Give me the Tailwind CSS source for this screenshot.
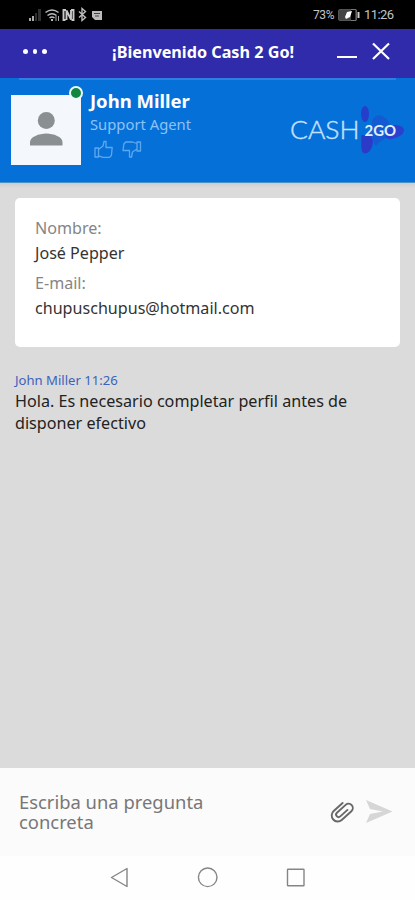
<!DOCTYPE html>
<html lang="es">
<head>
<meta charset="utf-8">
<meta name="viewport" content="width=device-width, initial-scale=1">
<title>Cash 2 Go</title>
<script src="https://cdn.jsdelivr.net/npm/@tailwindcss/browser@4"></script>
</head>
<body class="w-[415px] h-[900px] overflow-hidden flex flex-col bg-[#dbdbdb] font-['Noto_Sans',sans-serif] whitespace-nowrap">
  <!-- Status bar -->
  <div class="h-[29px] shrink-0 bg-black flex items-center pl-[28px] pr-[20px] text-[#c4c4c4]">
    <svg class="w-[76px] h-[16px]" viewBox="28 7 76 16" fill="none">
      <path d="M29 18h2v3h-2zM32 16h2v5h-2z" fill="#aaa"/><path d="M35 13h2v8h-2zM38 9h3v12h-3z" fill="#303030"/>
      <path d="M45.500 12.500q6.500-5 13 0M47.500 15.500q4.500-3.500 9 0M49.500 18q2.500-2 5 0" stroke="#bbb" stroke-width="1.500"/>
      <path d="M51 19h2v2h-2z" fill="#bbb"/><path d="M56 16v5M58.500 16v5" stroke="#aaa"/>
      <path d="M66 10h-2.500v10h2M66.500 20v-9.500l4.500 9v-9.500M71 10h2.500v10h-2" stroke="#c8c8c8" stroke-width="1.900"/>
      <path d="M79 11.500l6.500 6-3.500 3v-12l3.500 3-6.500 6" stroke="#bbb" stroke-width="1.400"/>
      <path d="M92 11h10v9h-7l-3-3z" fill="#bbb"/><path d="M94 13.500h6M95 16h4" stroke="#444"/>
    </svg>
    <span class="ml-auto w-[24px] text-[12px] tracking-[-0.4px] font-[Roboto,sans-serif]">73%</span>
    <svg class="w-[24px] h-[14px]" viewBox="0 0 24 14"><rect x="1.500" y="1.500" width="18" height="11" rx="1.500" fill="#444" stroke="#555"/><path d="M14 1.500h5v11h-5" fill="#000" stroke="#777"/><path d="M20.500 4h2v6h-2z" fill="#ccc"/><path d="M8 9l2-5 5-1-2 6-4 2z" fill="#fff"/></svg>
    <span class="ml-[3px] w-[31px] text-[13px] tracking-[-0.6px] font-[Roboto,sans-serif]">11:26</span>
  </div>
  <!-- Chat title bar -->
  <header class="h-[49px] shrink-0 bg-[#2f2bab] flex items-center text-white">
    <div class="ml-[23px] -mt-[4px] w-[89px] flex gap-[5px]"><i class="size-[4.500px] rounded-full bg-white"></i><i class="size-[4.500px] rounded-full bg-white"></i><i class="size-[4.500px] rounded-full bg-white"></i></div>
    <h1 class="w-[225px] text-[16.200px] font-bold leading-[20px] -mt-[3px]">¡Bienvenido Cash 2 Go!</h1>
    <svg class="w-[60px] h-[24px] -mt-[5px]" viewBox="337 39 60 24" fill="none" stroke="#fff" stroke-width="2.200"><path d="M337 57h20M373 43.500l16 15.500M389 43.500l-16 15.500"/></svg>
  </header>
  <!-- Agent -->
  <section class="h-[105px] shrink-0 bg-[#0670d9] border-b border-[#4a90c8] flex flex-col">
    <div class="mx-[19px] h-[2px] shrink-0 bg-[#2f7fe2]"></div>
    <div class="flex pl-[11px]">
      <div class="relative mt-[15px] size-[70px] bg-[#f4f8fc]">
        <svg class="size-full" viewBox="0 0 70 70" fill="#8a9092"><circle cx="35.300" cy="25.500" r="8.500"/><path d="M19 50.500v-3.500c0-5 9-8.500 16.300-8.500S51.500 42 51.500 47v3.500z"/></svg>
        <i class="absolute -top-[9px] left-[58px] size-[14px] rounded-full bg-[#10873e] border-[2.500px] border-[#eef8ff]"></i>
      </div>
      <div class="ml-[9px] w-[199px] pt-[8px]">
        <div class="text-[18.500px] leading-[25px] font-bold text-white">John Miller</div>
        <div class="text-[14.800px] leading-[20px] text-[#8cc3f5] mt-[1px]">Support Agent</div>
        <svg class="mt-[6px] ml-[4px] w-[50px] h-[20px]" viewBox="0 0 50 20" fill="none" stroke="#5ca8f0" stroke-width="1.300" stroke-linejoin="round">
          <path d="M1 8h3.500v9H1zM4.500 9.500L9 6l1-4.500h2v6h6.200l-.8 8-1.900 1.900H9l-4.500-1.500"/>
          <path d="M46.500 2H43v9h3.500zM43 9l-4.500 3-1 5h-2v-6.500H29l.9-6.500 1.800-2h6.800L43 3.500"/>
        </svg>
      </div>
      <svg class="mt-[22px] w-[116px] h-[56px]" viewBox="288 102 116 56">
        <ellipse cx="364" cy="114" rx="4" ry="8" fill="#263fca"/>
        <path d="M371 121c2-6 8-7 12-4 5 2 8 11 5 18-4 5-9 5-13 11-4-3-5-18-4-25z" fill="#145bd3"/>
        <path d="M360.500 135h9c3 4 3 9 1 13-2 5-7 7-9 4-2-4-1-12-1-17z" fill="#2b3bc8"/>
        <path d="M392 125c5 0 11 1 11 5 0 5-6 7-12 9-5 1-9-3-6-6z" fill="#2941ce"/>
        <text x="289" y="139.300" font-family="Lato" font-size="25.500" font-weight="300" fill="#c4e2ff" stroke="#c4e2ff" stroke-width=".4" textLength="69.500" lengthAdjust="spacingAndGlyphs">CASH</text>
        <text x="363.500" y="135.500" font-family="Lato" font-size="15.500" font-weight="700" fill="#e2efff" textLength="31.500" lengthAdjust="spacingAndGlyphs">2GO</text>
      </svg>
    </div>
  </section>
  <!-- Conversation -->
  <main class="h-[585px] shrink-0 px-[15px] pt-[15px] bg-linear-to-b from-[#cdcdcd] to-[#dbdbdb] to-[5px]">
    <dl class="h-[149px] w-[385px] rounded-[5px] bg-white pl-[20px] pt-[19px] text-[16.100px] leading-[22px]">
      <dt class="text-[#858585]">Nombre:</dt>
      <dd class="mt-[3px] text-[#333]">José Pepper</dd>
      <dt class="mt-[8px] text-[#858585]">E-mail:</dt>
      <dd class="mt-[3px] text-[#333]">chupuschupus@hotmail.com</dd>
    </dl>
    <p class="mt-[25px] text-[13.100px] leading-[17px] text-[#3d62bd]">John Miller 11:26</p>
    <p class="mt-[1px] text-[16.150px] leading-[22px] text-[#222]">Hola. Es necesario completar perfil antes de<br>disponer efectivo</p>
  </main>
  <!-- Composer -->
  <div class="h-[88px] shrink-0 bg-[#fbfbfb] flex pl-[19px]">
    <div class="w-[307px] pt-[24px] text-[18.400px] leading-[20px] text-[#777]">Escriba una pregunta<br>concreta</div>
    <svg class="mt-[28px] w-[70px] h-[32px]" viewBox="326 796 70 32" fill="none">
      <path transform="translate(341.800 811.800) rotate(48)" d="M-6-6.500V5.500a6 6 0 0 0 12 0V-7.500a4.300 4.300 0 0 0-8.600 0V4.200a2.500 2.500 0 0 0 5 0V-5.500" stroke="#686868" stroke-width="1.900" stroke-linecap="round"/>
      <path d="M366 800l26.500 11.500L366 823l4-9 13-2.500-13-2.500z" fill="#d6d6d6"/>
    </svg>
  </div>
  <!-- System navigation -->
  <nav class="h-[44px] shrink-0 bg-[#fefefe]">
    <svg class="w-[415px] h-[44px]" viewBox="0 856 415 44" fill="none" stroke="#858585" stroke-width="1.400"><path d="M111.500 877.500l15.500-9v18z" stroke-linejoin="round"/><circle cx="207.700" cy="877.300" r="9.300"/><rect x="287.500" y="869.200" width="16.500" height="16.500" rx=".5"/></svg>
  </nav>
</body>
</html>
